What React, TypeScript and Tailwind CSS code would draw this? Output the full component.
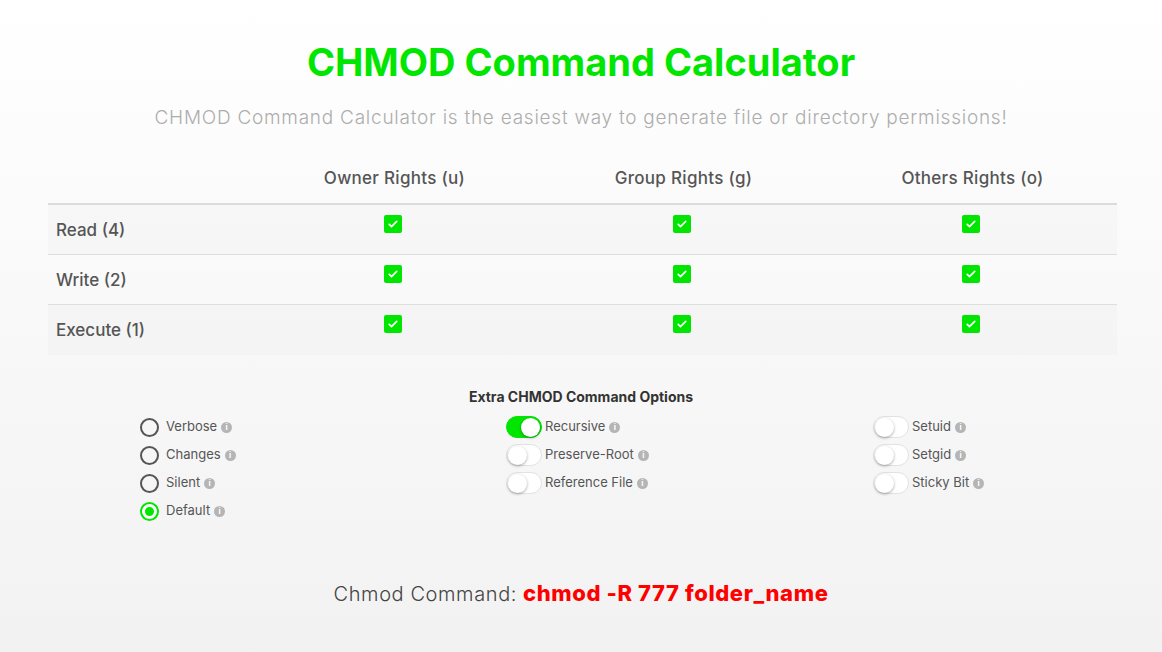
import { useState } from 'react'

const groups = ['Owner Rights (u)', 'Group Rights (g)', 'Others Rights (o)']
const perms = ['Read (4)', 'Write (2)', 'Execute (1)']

function Info() {
  return (
    <span className="ml-[4px] inline-flex h-[11px] w-[11px] items-center justify-center rounded-full bg-[#b5b5b5] text-[8px] font-bold leading-none text-white">
      i
    </span>
  )
}

function Check() {
  return (
    <span className="flex h-[18px] w-[18px] items-center justify-center rounded-[2px] bg-[#00e600]">
      <svg viewBox="0 0 16 16" className="h-[12px] w-[12px]" fill="none" stroke="white" strokeWidth="2.2" strokeLinecap="round" strokeLinejoin="round">
        <path d="M3 8.5l3 3 7-7" />
      </svg>
    </span>
  )
}

function Radio({ label, on }: { label: string; on?: boolean }) {
  return (
    <div className="flex h-[28px] items-center">
      <span
        className={
          on
            ? 'flex h-[19px] w-[19px] items-center justify-center rounded-full border-2 border-[#00e600] bg-white'
            : 'h-[19px] w-[19px] rounded-full border-2 border-[#555]'
        }
      >
        {on && <span className="h-[9px] w-[9px] rounded-full bg-[#00e600]" />}
      </span>
      <span className="ml-[7px] text-[13px] text-[#555]">{label}</span>
      <Info />
    </div>
  )
}

function Toggle({ label, on }: { label: string; on?: boolean }) {
  return (
    <div className="flex h-[28px] items-center">
      <span
        className={
          on
            ? 'flex h-[22px] w-[36px] items-center justify-end rounded-full border border-[#00e600] bg-[#00e600] p-[1px]'
            : 'flex h-[22px] w-[36px] items-center rounded-full border border-[#e2e2e2] bg-white p-[1px]'
        }
      >
        <span className="h-[19px] w-[19px] rounded-full bg-white shadow-[0_1px_3px_rgba(0,0,0,0.35)]" />
      </span>
      <span className="ml-[3px] text-[13px] text-[#555]">{label}</span>
      <Info />
    </div>
  )
}

export default function App() {
  const [, setX] = useState(0)
  return (
    <div
      className="min-h-[652px] w-full bg-gradient-to-b from-white to-[#f2f2f2] pt-[40px] font-['Inter',sans-serif]"
      onClick={() => setX((v) => v + 1)}
    >
      <h1 className="text-center text-[38px] font-bold leading-[44px] text-[#00e600]">
        CHMOD Command Calculator
      </h1>
      <p className="mt-[22px] text-center text-[19px] font-light leading-[24px] tracking-[0.75px] text-[#adadad]">
        CHMOD Command Calculator is the easiest way to generate file or directory permissions!
      </p>

      <div className="mx-[48px] mt-[25px] w-[1069px]">
        <div className="grid h-[50px] grid-cols-[202px_1fr_1fr_1fr] items-center border-b-2 border-[#dcdcdc] text-[17px] font-medium tracking-[0.3px] text-[#555]">
          <div />
          {groups.map((g) => (
            <div key={g} className="text-center">
              {g}
            </div>
          ))}
        </div>
        {perms.map((p, i) => (
          <div
            key={p}
            className={
              'grid h-[50px] grid-cols-[202px_1fr_1fr_1fr] ' +
              (i < 2 ? 'border-b border-[#dedede] ' : '') +
              (i % 2 === 0 ? 'bg-[rgba(0,0,0,0.015)]' : '')
            }
          >
            <div className="flex items-center pl-[8px] pt-[2px] text-[17px] font-medium text-[#555]">{p}</div>
            {groups.map((g) => (
              <div key={g} className="flex justify-center pt-[10px] pr-[4px]">
                <Check />
              </div>
            ))}
          </div>
        ))}
      </div>

      <div className="mt-[31px] text-center text-[14px] font-bold text-[#333]">Extra CHMOD Command Options</div>
      <div className="mt-[6px] grid grid-cols-[366px_367px_auto] pl-[140px]">
        <div>
          <Radio label="Verbose" />
          <Radio label="Changes" />
          <Radio label="Silent" />
          <Radio label="Default" on />
        </div>
        <div>
          <Toggle label="Recursive" on />
          <Toggle label="Preserve-Root" />
          <Toggle label="Reference File" />
        </div>
        <div>
          <Toggle label="Setuid" />
          <Toggle label="Setgid" />
          <Toggle label="Sticky Bit" />
        </div>
      </div>

      <div className="mt-[52px] flex items-baseline justify-center pb-[30px]">
        <span className="text-[20px] font-light tracking-[0.6px] text-[#444]">Chmod Command:</span>
        <span className="ml-[6px] text-[22px] font-extrabold tracking-[0.6px] text-[#ff0000]">chmod -R 777 folder_name</span>
      </div>
    </div>
  )
}
